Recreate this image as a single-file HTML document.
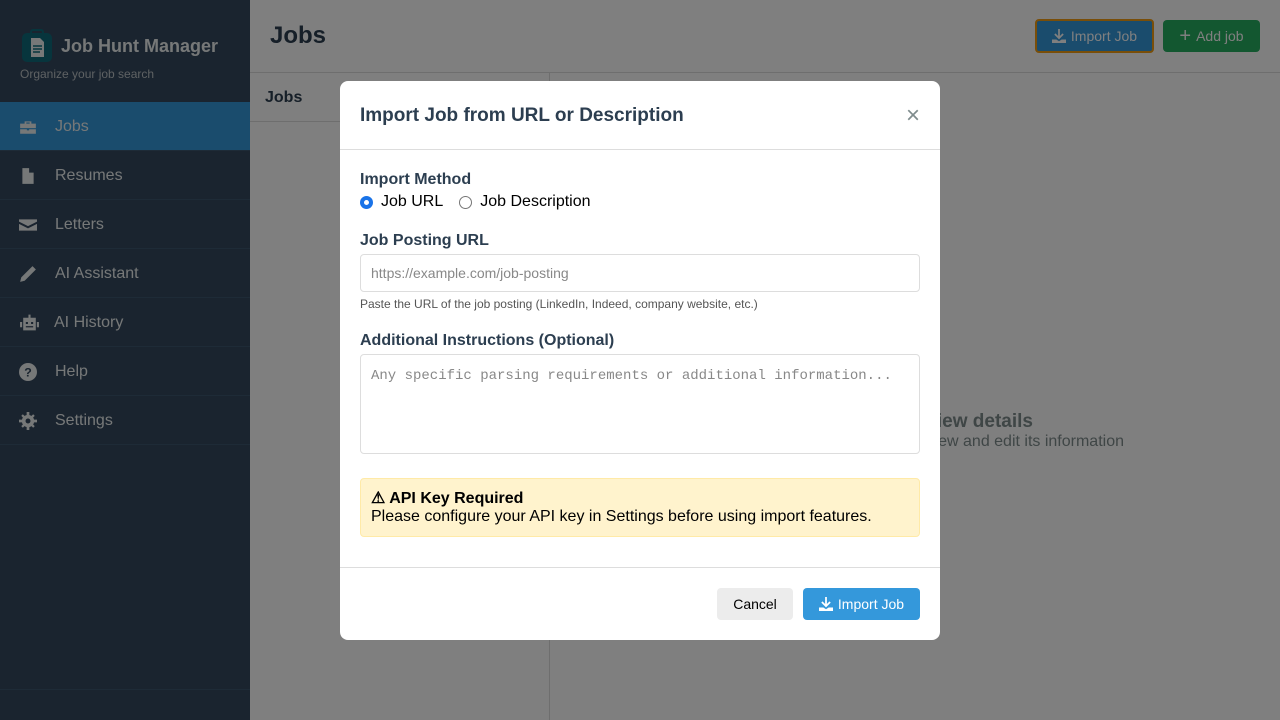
<!DOCTYPE html>
<html><head><meta charset="utf-8"><style>
*{box-sizing:border-box;margin:0;padding:0}
body{width:1280px;height:720px;overflow:hidden;font-family:"Liberation Sans",sans-serif;background:#fff;position:relative}
.sb{position:absolute;left:0;top:0;width:250px;height:720px;background:#34495e;color:#ecf0f1}
.logo{position:absolute;left:20px;top:29px;display:flex;align-items:center}
.logo b{font-size:18px;margin-left:6px;color:#ecf0f1}
.sub{position:absolute;left:20px;top:67px;font-size:12px;color:#bdc3c7}
.nav{position:absolute;top:102px;left:0;width:250px}
.nav div{height:49px;border-bottom:1px solid #3d566e;display:flex;align-items:center;font-size:16px;color:#ecf0f1;padding-top:1px}
.nav div.a{background:#3498db}
.nav svg{margin-left:19px;margin-right:18px;width:18px;height:18px;fill:#ecf0f1}
.bot{position:absolute;left:0;top:689px;width:250px;border-top:1px solid #3d566e}
.hdr{position:absolute;left:250px;top:0;right:0;height:73px;border-bottom:1px solid #ddd}
.hdr h1{position:absolute;left:20px;top:22px;font-size:24px;color:#2c3e50}
.btn{position:absolute;height:32px;border-radius:4px;color:#fff;font-size:14px;display:flex;align-items:center;justify-content:center}
.btn svg{width:14px;height:14px;fill:#fff;margin-right:5px}
.list{position:absolute;left:250px;top:73px;width:300px;bottom:0;border-right:1px solid #ddd}
.list .h{height:49px;border-bottom:1px solid #ddd;padding:16px 15px;font-weight:bold;font-size:16px;color:#2c3e50}
.ov{position:absolute;inset:0;background:rgba(0,0,0,.5)}
.m{position:absolute;left:340px;top:81px;width:600px;height:559px;background:#fff;border-radius:8px}
.m h2{position:absolute;left:20px;top:24px;font-size:19px;color:#2c3e50}
.x{position:absolute;left:566px;top:21px;font-size:24px;color:#7f8c8d}
.l{position:absolute;left:20px;font-size:16px;font-weight:bold;color:#2c3e50}
.inp{position:absolute;left:20px;width:560px;border:1px solid #ddd;border-radius:4px}
</style></head><body>
<div class="sb">
 <div class="logo"><svg width="35" height="35" viewBox="0 0 35 35"><rect x="2" y="4" width="30" height="29" rx="5" fill="#0f6b7a"/><rect x="11" y="1" width="12" height="6" rx="2" fill="none" stroke="#0f6b7a" stroke-width="2"/><path d="M11 9h9l4 4v15H11z" fill="#ecf0f1"/><path d="M13 17h9M13 20h9M13 23h7" stroke="#0f6b7a" stroke-width="1.5"/></svg><b>Job Hunt Manager</b></div>
 <div class="sub">Organize your job search</div>
 <div class="nav">
  <div class="a"><svg viewBox="0 0 16 16"><path d="M5 3h6v2h4v4H1V5h4zM6.5 4v1h3V4zM1 10h6v1h2v-1h6v4H1z"/></svg>Jobs</div>
  <div><svg viewBox="0 0 16 16"><path d="M3 1h6l4 4v10H3zM9 1v4h4M5 8h6v1H5zm0 2h6v1H5zm0 2h6v1H5z"/></svg>Resumes</div>
  <div><svg viewBox="0 0 16 16"><path d="M0 3h16v2L8 9 0 5zM0 7l8 4 8-4v6H0z"/></svg>Letters</div>
  <div><svg viewBox="0 0 16 16"><path d="M12 1l3 3-10 10-4 1 1-4z"/></svg>AI Assistant</div>
  <div><svg viewBox="0 0 20 16" style="width:21px;margin-right:14px"><path d="M9 0h2v3H9zM4 3h12v12H4zM1 7h2v5H1zm16 0h2v5h-2z"/><path d="M6.5 7h2v2h-2zm5 0h2v2h-2zM6.5 11h7v1.2h-7z" fill="#34495e"/></svg>AI History</div>
  <div><svg viewBox="0 0 16 16"><circle cx="8" cy="8" r="8"/><text x="8" y="12" font-size="11" font-weight="bold" text-anchor="middle" fill="#34495e" font-family="Liberation Sans">?</text></svg>Help</div>
  <div><svg viewBox="0 0 16 16"><circle cx="8" cy="8" r="5.5"/><path d="M6.8 0h2.4v16H6.8zM0 6.8h16v2.4H0z"/><path d="M2 3.4L3.4 2l10.6 10.6-1.4 1.4zM12.6 2L14 3.4 3.4 14 2 12.6z"/><circle cx="8" cy="8" r="2.2" fill="#34495e"/></svg>Settings</div>
 </div>
 <div class="bot"></div>
</div>
<div class="hdr"><h1>Jobs</h1>
 <div class="btn" style="left:785px;top:19px;width:119px;height:34px;background:#3498db;border:2px solid #f39c12"><svg viewBox="0 0 16 16"><path d="M7 0h2v8l3-3 1.4 1.4L8 11.8 2.6 6.4 4 5l3 3zM0 12h5l3 2 3-2h5v4H0z"/></svg>Import Job</div>
 <div class="btn" style="left:913px;top:20px;width:97px;background:#27ae60;font-size:14px"><span style="font-size:20px;margin-right:5px;line-height:14px">+</span>Add job</div>
</div>
<div class="list"><div class="h">Jobs</div></div>
<div style="position:absolute;right:247px;top:411px;font-size:19px;font-weight:bold;color:#7f8c8d;white-space:nowrap">Select a job to view details</div>
<div style="position:absolute;right:156px;top:433px;font-size:16px;color:#7f8c8d;white-space:nowrap">Click on a job to view and edit its information</div>
<div class="ov"></div>
<div class="m">
 <h2>Import Job from URL or Description</h2><div class="x">×</div>
 <div style="position:absolute;left:0;right:0;top:68px;border-top:1px solid #ddd"></div>
 <div class="l" style="top:90px">Import Method</div>
 <div style="position:absolute;left:20px;top:112px;font-size:16px;color:#000;display:flex;align-items:center">
  <span style="width:13px;height:13px;border-radius:50%;border:4px solid #1a73e8;display:inline-block;margin-right:8px"></span>Job URL
  <span style="width:13px;height:13px;border-radius:50%;border:1px solid #767676;display:inline-block;margin:0 8px 0 16px"></span>Job Description</div>
 <div class="l" style="top:151px">Job Posting URL</div>
 <div class="inp" style="top:173px;height:38px;padding:10px;font-size:14px;color:#888">https://example.com/job-posting</div>
 <div style="position:absolute;left:20px;top:216px;font-size:12px;color:#555">Paste the URL of the job posting (LinkedIn, Indeed, company website, etc.)</div>
 <div class="l" style="top:251px">Additional Instructions (Optional)</div>
 <div class="inp" style="top:273px;height:100px;padding:13px 10px;font-family:'Liberation Mono',monospace;font-size:14px;color:#888">Any specific parsing requirements or additional information...</div>
 <div style="position:absolute;left:20px;top:397px;width:560px;height:59px;background:#fff3cd;border:1px solid #ffeaa7;border-radius:4px;padding:11px 10px;font-size:16px;color:#000;line-height:18px"><b>⚠ API Key Required</b><br>Please configure your API key in Settings before using import features.</div>
 <div style="position:absolute;left:0;right:0;top:486px;border-top:1px solid #ddd"></div>
 <div class="btn" style="left:377px;top:507px;width:76px;background:#ececec;color:#000">Cancel</div>
 <div class="btn" style="left:463px;top:507px;width:117px;background:#3498db"><svg viewBox="0 0 16 16"><path d="M7 0h2v8l3-3 1.4 1.4L8 11.8 2.6 6.4 4 5l3 3zM0 12h5l3 2 3-2h5v4H0z"/></svg>Import Job</div>
</div>
</body></html>
